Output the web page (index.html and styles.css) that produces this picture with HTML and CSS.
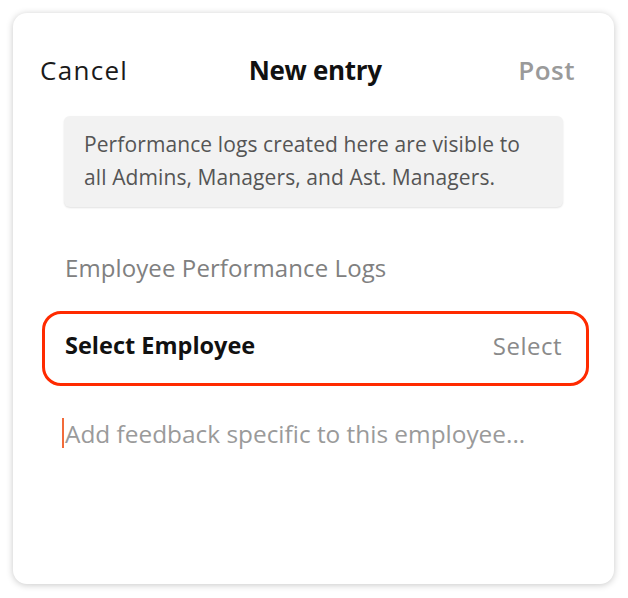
FILE: index.html
```html
<!DOCTYPE html>
<html>
<head>
<meta charset="utf-8">
<link rel="stylesheet" href="styles.css">
</head>
<body>
<div class="card">
  <div class="header">
    <span class="cancel">Cancel</span>
    <span class="title">New entry</span>
    <span class="post">Post</span>
  </div>
  <div class="notice">Performance logs created here are visible to<br>all Admins, Managers, and Ast. Managers.</div>
  <div class="section">Employee Performance Logs</div>
  <div class="select-row">
    <span class="select-label">Select Employee</span>
    <span class="select-value">Select</span>
  </div>
  <div class="feedback"><span class="caret"></span><span class="placeholder">Add feedback specific to this employee...</span></div>
</div>
</body>
</html>
```
FILE: styles.css
```css
html, body {
  margin: 0;
  padding: 0;
  background: #ffffff;
}
body {
  width: 628px;
  height: 598px;
  font-family: "Open Sans", "Liberation Sans", sans-serif;
  overflow: hidden;
}
.card {
  margin: 13px 0 0 13px;
  width: 601px;
  height: 571px;
  border-radius: 14px;
  background: #fff;
  box-shadow: 0 1px 7px rgba(0, 0, 0, 0.22);
  box-sizing: border-box;
  padding-top: 39px;
  display: flex;
  flex-direction: column;
}
.header {
  display: flex;
  justify-content: space-between;
  align-items: center;
  padding: 0 39px 0 27px;
  height: 36px;
  font-size: 26px;
}
.cancel { color: #1a1a1a; letter-spacing: 1.3px; }
.title { color: #111; font-weight: 700; letter-spacing: -0.3px; margin-right: 16px; }
.post { color: #9a9a9a; font-weight: 600; letter-spacing: 0.5px; }
.notice {
  margin: 28px 51px 0 51px;
  background: #f2f2f2;
  border-radius: 6px;
  box-shadow: 0 1px 2px rgba(0, 0, 0, 0.12);
  padding: 12px 20px 13px 20px;
  font-size: 21px;
  letter-spacing: 0.1px;
  line-height: 33px;
  color: #555;
}
.section {
  margin: 47px 0 0 52px;
  font-size: 24px;
  letter-spacing: 0.1px;
  color: #808080;
  line-height: 28px;
}
.select-row {
  margin: 29px 25px 0 29px;
  height: 75px;
  border: 3px solid #ff2a00;
  border-radius: 19px;
  box-sizing: border-box;
  display: flex;
  justify-content: space-between;
  align-items: center;
  padding: 0 24px 7px 20px;
  font-size: 23.5px;
}
.select-label { font-weight: 700; color: #111; }
.select-value { color: #8a8a8a; font-size: 24px; letter-spacing: 0.5px; }
.feedback {
  margin: 32px 0 0 49px;
  display: flex;
  align-items: center;
  height: 30px;
  font-size: 24.4px;
}
.caret {
  width: 2px;
  height: 30px;
  background: #f26b3a;
  margin-right: 1px;
}
.placeholder { color: #9a9a9a; }
```
